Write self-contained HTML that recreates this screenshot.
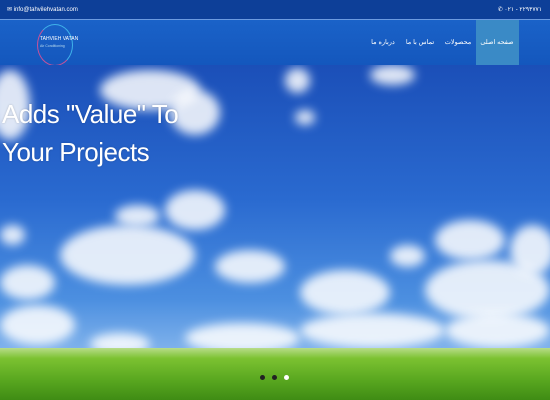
<!DOCTYPE html>
<html><head><meta charset="utf-8"><style>
*{margin:0;padding:0;box-sizing:border-box}
body{width:550px;height:400px;overflow:hidden;font-family:"Liberation Sans","Noto Sans CJK SC",sans-serif;position:relative}
.top{position:absolute;left:0;top:0;width:550px;height:19px;background:#0d3f98;color:#fff;font-size:6px}
.nav{position:absolute;left:0;top:19px;width:550px;height:46px;background:linear-gradient(#1a62c8,#1457bd);border-top:1px solid #6c9be0}
.hero{position:absolute;left:0;top:65px;width:550px;height:335px;background:linear-gradient(#1b4fb8 0%,#2a6ad0 40%,#4c8fe0 70%,#8ab9ee 88%);overflow:hidden}
.grass{position:absolute;left:0;top:283px;width:550px;height:52px;background:linear-gradient(#b8dc8a,#7cc231 20%,#5aa820 60%,#3f8c14)}
.c{position:absolute;background:#fff;border-radius:50%;filter:blur(5px);opacity:.85}
.h1{position:absolute;left:2px;top:30px;color:#fff;font-size:26px;line-height:38px;letter-spacing:-0.5px;text-shadow:0 0 2px rgba(0,0,0,.2)}
.menu span{position:absolute;top:18px;color:#fff;font-size:6.5px;width:40px;text-align:center;direction:rtl;white-space:nowrap}
</style></head><body>
<div class="top"><span style="position:absolute;left:7px;top:6px">✉ info@tahvilehvatan.com</span><span style="position:absolute;right:8px;top:6px">✆ ۰۲۱ - ۲۲۹۴۷۷۱</span></div>
<div class="nav">
<div style="position:absolute;left:37px;top:4px;width:36px;height:42px;border-radius:50%;border:1px solid #c6529a;border-right-color:#3fb2ea;border-top-color:#3fb2ea"></div>
<div style="position:absolute;left:40px;top:16px;color:#fff;font-size:5px;line-height:7px">TAHVIEH VATAN<br><span style="font-size:3.5px;color:#bde">Air Conditioning</span></div>
<div style="position:absolute;left:476px;top:0;width:43px;height:46px;background:#3a8ac6"></div>
<div class="menu"><span style="left:477px">صفحه اصلی</span><span style="left:438px">محصولات</span><span style="left:400px">تماس با ما</span><span style="left:363px">درباره ما</span></div>
</div>
<div class="hero">
<div class="c" style="left:-10px;top:5px;width:40px;height:70px"></div>
<div class="c" style="left:100px;top:5px;width:100px;height:40px"></div>
<div class="c" style="left:170px;top:25px;width:50px;height:45px"></div>
<div class="c" style="left:370px;top:0;width:45px;height:20px"></div>
<div class="c" style="left:285px;top:3px;width:25px;height:25px"></div>
<div class="c" style="left:295px;top:45px;width:20px;height:15px"></div>
<div class="c" style="left:60px;top:160px;width:135px;height:60px"></div>
<div class="c" style="left:165px;top:125px;width:60px;height:40px"></div>
<div class="c" style="left:115px;top:140px;width:45px;height:22px"></div>
<div class="c" style="left:215px;top:185px;width:70px;height:33px"></div>
<div class="c" style="left:0;top:160px;width:25px;height:20px"></div>
<div class="c" style="left:0;top:200px;width:55px;height:35px"></div>
<div class="c" style="left:0;top:240px;width:75px;height:40px"></div>
<div class="c" style="left:300px;top:205px;width:90px;height:45px"></div>
<div class="c" style="left:435px;top:155px;width:70px;height:40px"></div>
<div class="c" style="left:390px;top:180px;width:35px;height:22px"></div>
<div class="c" style="left:425px;top:195px;width:125px;height:60px"></div>
<div class="c" style="left:510px;top:160px;width:45px;height:50px"></div>
<div class="c" style="left:185px;top:258px;width:115px;height:30px"></div>
<div class="c" style="left:300px;top:248px;width:145px;height:35px"></div>
<div class="c" style="left:445px;top:248px;width:105px;height:35px"></div>
<div class="c" style="left:90px;top:268px;width:60px;height:22px"></div>
<div class="grass"></div>
<div class="h1">Adds "Value" To<br>Your Projects</div>
<div style="position:absolute;left:260px;top:310px;width:5px;height:5px;border-radius:50%;background:#222"></div>
<div style="position:absolute;left:272px;top:310px;width:5px;height:5px;border-radius:50%;background:#222"></div>
<div style="position:absolute;left:284px;top:310px;width:5px;height:5px;border-radius:50%;background:#fff"></div>
</div>
</body></html>
